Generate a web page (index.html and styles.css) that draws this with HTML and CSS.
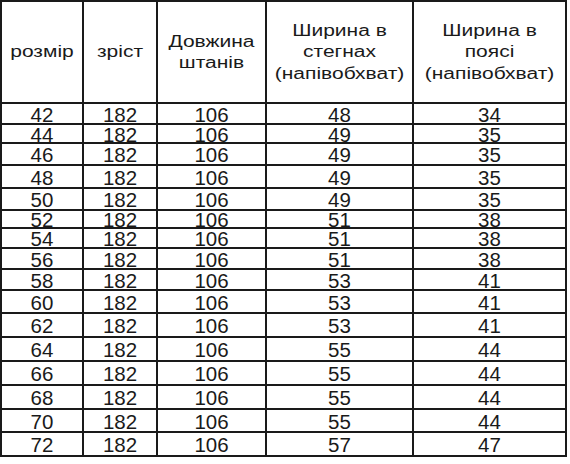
FILE: index.html
```html
<!DOCTYPE html>
<html lang="uk">
<head>
<meta charset="utf-8">
<title>Розміри</title>
<link rel="stylesheet" href="styles.css">
</head>
<body>
<table class="sizes">
  <colgroup>
    <col class="c1"><col class="c2"><col class="c3"><col class="c4"><col class="c5">
  </colgroup>
  <thead>
    <tr class="head">
      <th><span class="lbl">розмір</span></th>
      <th><span class="lbl">зріст</span></th>
      <th><span class="lbl">Довжина<br>штанів</span></th>
      <th><span class="lbl">Ширина в<br>стегнах<br>(напівобхват)</span></th>
      <th><span class="lbl">Ширина в<br>поясі<br>(напівобхват)</span></th>
    </tr>
  </thead>
  <tbody>
    <tr class="h21"><td>42</td><td>182</td><td>106</td><td>48</td><td>34</td></tr>
    <tr class="h19"><td>44</td><td>182</td><td>106</td><td>49</td><td>35</td></tr>
    <tr class="h22"><td>46</td><td>182</td><td>106</td><td>49</td><td>35</td></tr>
    <tr class="h23"><td>48</td><td>182</td><td>106</td><td>49</td><td>35</td></tr>
    <tr class="h22"><td>50</td><td>182</td><td>106</td><td>49</td><td>35</td></tr>
    <tr class="h18"><td>52</td><td>182</td><td>106</td><td>51</td><td>38</td></tr>
    <tr class="h20"><td>54</td><td>182</td><td>106</td><td>51</td><td>38</td></tr>
    <tr class="h21"><td>56</td><td>182</td><td>106</td><td>51</td><td>38</td></tr>
    <tr class="h21"><td>58</td><td>182</td><td>106</td><td>53</td><td>41</td></tr>
    <tr class="h23"><td>60</td><td>182</td><td>106</td><td>53</td><td>41</td></tr>
    <tr class="h24"><td>62</td><td>182</td><td>106</td><td>53</td><td>41</td></tr>
    <tr class="h24"><td>64</td><td>182</td><td>106</td><td>55</td><td>44</td></tr>
    <tr class="h24"><td>66</td><td>182</td><td>106</td><td>55</td><td>44</td></tr>
    <tr class="h24"><td>68</td><td>182</td><td>106</td><td>55</td><td>44</td></tr>
    <tr class="h23"><td>70</td><td>182</td><td>106</td><td>55</td><td>44</td></tr>
    <tr class="h24"><td>72</td><td>182</td><td>106</td><td>57</td><td>47</td></tr>
  </tbody>
</table>
</body>
</html>
```
FILE: styles.css
```css
html, body {
  margin: 0;
  padding: 0;
  background: #ffffff;
}

body {
  font-family: "Liberation Sans", Arial, sans-serif;
  color: #1a1a1a;
}

.sizes {
  border-collapse: collapse;
  table-layout: fixed;
  width: 567px;
}

.c1 { width: 82px; }
.c2 { width: 74px; }
.c3 { width: 109px; }
.c4 { width: 147px; }
.c5 { width: 153px; }

.sizes th,
.sizes td {
  border: 2px solid #1a1a1a;
  padding: 0;
  text-align: center;
  vertical-align: middle;
  font-weight: normal;
  white-space: nowrap;
}

.sizes td {
  font-size: 20.5px;
  line-height: 14px;
  padding-top: 2px;
}

.head { height: 102px; }

.sizes th {
  font-size: 21px;
}

.lbl {
  display: inline-block;
  line-height: 28px;
  transform: scaleY(0.78);
}

.h18 { height: 18px; }
.h19 { height: 19px; }
.h20 { height: 20px; }
.h21 { height: 21px; }
.h22 { height: 22px; }
.h23 { height: 23px; }
.h24 { height: 24px; }
```
